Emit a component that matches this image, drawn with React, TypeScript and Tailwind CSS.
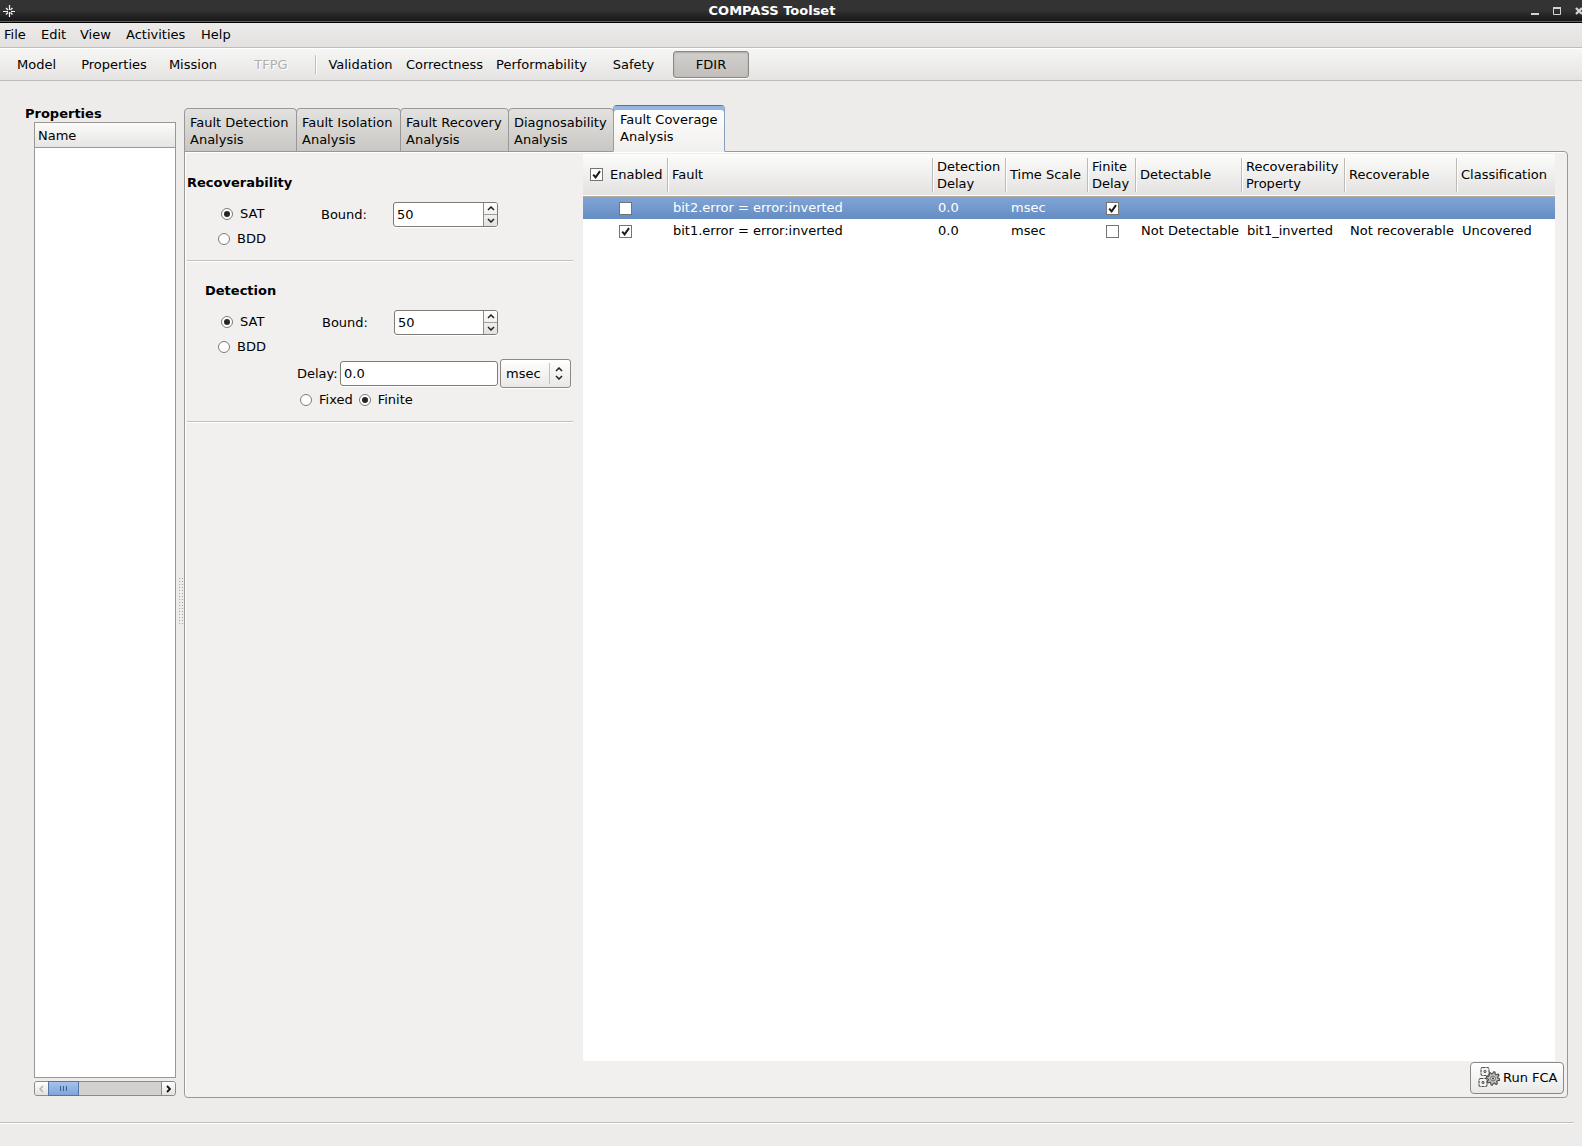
import React, { useState } from 'react';
import clsx from 'clsx';

interface FaultRow {
  enabled: boolean;
  fault: string;
  delay: string;
  scale: string;
  finite: boolean;
  detectable: string;
  property: string;
  recoverable: string;
  classification: string;
}

const MENUS = [
  { label: 'File', width: 'w-[37px]' },
  { label: 'Edit', width: 'w-[39px]' },
  { label: 'View', width: 'w-[46px]' },
  { label: 'Activities', width: 'w-[75px]' },
  { label: 'Help', width: 'w-[46px]' },
];

const TABS = [
  { label: 'Fault Detection', width: 'w-[113px]' },
  { label: 'Fault Isolation', width: 'w-[105px]' },
  { label: 'Fault Recovery', width: 'w-[109px]' },
  { label: 'Diagnosability', width: 'w-[106px]' },
  { label: 'Fault Coverage', width: 'w-[112px]' },
];

const COLUMNS = [
  { label: 'Fault', width: '' },
  { label: 'Detection Delay', width: 'w-[73px]' },
  { label: 'Time Scale', width: 'w-[82px]' },
  { label: 'Finite Delay', width: 'w-[48px]' },
  { label: 'Detectable', width: 'w-[106px]' },
  { label: 'Recoverability Property', width: 'w-[103px]' },
  { label: 'Recoverable', width: 'w-[112px]' },
  { label: 'Classification', width: 'w-[98px]' },
];

const FAULTS: FaultRow[] = [
  {
    enabled: false,
    fault: 'bit2.error = error:inverted',
    delay: '0.0',
    scale: 'msec',
    finite: true,
    detectable: '',
    property: '',
    recoverable: '',
    classification: '',
  },
  {
    enabled: true,
    fault: 'bit1.error = error:inverted',
    delay: '0.0',
    scale: 'msec',
    finite: false,
    detectable: 'Not Detectable',
    property: 'bit1_inverted',
    recoverable: 'Not recoverable',
    classification: 'Uncovered',
  },
];

const Check: React.FC<{ label: string; checked: boolean; id?: string }> = ({ label, checked, id }) => (
  <span className="inline-grid size-[13px] shrink-0 align-middle">
    <input
      id={id}
      type="checkbox"
      aria-label={label}
      defaultChecked={checked}
      className="peer col-start-1 row-start-1 size-[13px] appearance-none border border-[#767472] bg-white"
    />
    <svg viewBox="0 0 13 13" className="pointer-events-none col-start-1 row-start-1 hidden size-[13px] peer-checked:block">
      <path d="M3.2 6.6 L5.6 9.4 L10 3.2" fill="none" stroke="#1c1c1c" strokeWidth="2" />
    </svg>
  </span>
);

const Radio: React.FC<{ name: string; label: string; checked?: boolean; className?: string }> = ({
  name,
  label,
  checked,
  className,
}) => (
  <label className={clsx('flex h-[25px] items-center pb-[2px]', className)}>
    <span className="mt-px grid size-[12px] place-items-center">
      <input
        type="radio"
        name={name}
        defaultChecked={checked}
        className="peer col-start-1 row-start-1 size-[12px] appearance-none rounded-full border border-[#7d7b79] bg-white"
      />
      <span className="pointer-events-none col-start-1 row-start-1 hidden size-[6px] rounded-full bg-[#252525] peer-checked:block" />
    </span>
    <span className="ml-[7px]">{label}</span>
  </label>
);

const Chevron: React.FC<{ d: string }> = ({ d }) => (
  <svg viewBox="0 0 8 5" className="h-[5px] w-[8px]">
    <path d={d} fill="none" stroke="#222" strokeWidth="1.5" />
  </svg>
);

const Bound: React.FC<{ id: string; className?: string }> = ({ id, className }) => {
  const [value, setValue] = useState(50);
  return (
    <div className={clsx('flex items-center', className)}>
      <label htmlFor={id} className="w-[72px]">
        Bound:
      </label>
      <div className="flex h-[25px] flex-1 rounded-[3px] border border-[#7d7a77] bg-white shadow-[0_1px_0_#fff]">
        <input
          id={id}
          type="number"
          value={value}
          onChange={(e) => setValue(Number(e.target.value))}
          className="w-0 flex-1 appearance-none px-[3px] outline-none [-moz-appearance:textfield] [&::-webkit-inner-spin-button]:appearance-none"
        />
        <div className="flex w-[14px] flex-col rounded-r-[2px] border-l border-[#8e8b88] bg-linear-to-b from-white to-[#e2e1df]">
          <button
            type="button"
            aria-label="Increase bound"
            onClick={() => setValue(value + 1)}
            className="grid flex-1 place-items-center border-b border-[#a09e9b]"
          >
            <Chevron d="M1 4 L4 1 L7 4" />
          </button>
          <button
            type="button"
            aria-label="Decrease bound"
            onClick={() => setValue(value - 1)}
            className="grid flex-1 place-items-center"
          >
            <Chevron d="M1 1 L4 4 L7 1" />
          </button>
        </div>
      </div>
    </div>
  );
};

const Rule = () => <hr className="mr-[10px] ml-[2px] h-[2px] border-t border-b border-t-[#c0bfbc] border-b-white" />;

// Outline of a gear: four points per tooth, alternating outer and inner radius
const gearPoints = (cx: number, cy: number, outer: number, inner: number, teeth: number) =>
  Array.from({ length: teeth * 4 }, (_, i) => {
    const angle = ((i + 0.5) / (teeth * 4)) * Math.PI * 2;
    const r = i % 4 < 2 ? outer : inner;
    return `${(cx + r * Math.cos(angle)).toFixed(2)},${(cy + r * Math.sin(angle)).toFixed(2)}`;
  }).join(' ');

const GearIcon = () => (
  <svg viewBox="0 0 22 22" className="size-[22px]" strokeLinejoin="round">
    <polygon points={gearPoints(15, 12.5, 6.8, 4.8, 8)} fill="#c3c6bf" stroke="#4c4f4a" strokeWidth="1.2" />
    <circle cx="15" cy="12.5" r="2.4" fill="#e6e7e4" stroke="#666964" />
    <circle cx="15" cy="12.5" r="0.9" fill="#222" />
    <g fill="#f4f4f2" stroke="#4c4f4a" strokeWidth="1.2">
      <rect x="3" y="1.5" width="8" height="8" rx="1.5" strokeDasharray="3 0.8" />
      <rect x="1" y="12.5" width="8" height="8" rx="1.5" strokeDasharray="3 0.8" />
    </g>
    <circle cx="7" cy="5.5" r="1.1" fill="#ddd" stroke="#222" strokeWidth="0.8" />
    <circle cx="5" cy="16.5" r="1.1" fill="#ddd" stroke="#222" strokeWidth="0.8" />
  </svg>
);

const TitleBar = () => (
  <header className="flex h-[23px] items-center overflow-hidden border-b border-black bg-linear-to-b from-[#333] from-45% to-[#151515] text-white shadow-[inset_0_-1px_0_#4a6588]">
    <svg viewBox="0 0 20 22" className="h-[22px] w-[20px] shrink-0" stroke="#f2f2f0">
      <path d="M9.5 5v5M9.5 12v5M3 11.5h5M11 11.5h4" strokeWidth="1.2" />
      <path d="M6 8l2 2M12.5 8l-2 2M6 14.5l2-2M12.5 14.5l-2-2" strokeWidth="1.4" />
    </svg>
    <h1 className="flex-1 pb-[2px] text-center font-bold">COMPASS Toolset</h1>
    <div className="flex w-[58px] shrink-0 gap-[14px] pl-[7px]">
      <button type="button" aria-label="Minimize" className="shrink-0">
        <svg viewBox="0 0 8 8" className="size-[8px]">
          <path d="M0 7h8" stroke="#d3d3d1" strokeWidth="2" />
        </svg>
      </button>
      <button type="button" aria-label="Maximize" className="shrink-0">
        <svg viewBox="0 0 8 8" className="size-[8px]">
          <path d="M0 1h8" stroke="#d3d3d1" strokeWidth="2" />
          <path d="M.5 0v7.5h7V0" fill="none" stroke="#d3d3d1" />
        </svg>
      </button>
      <button type="button" aria-label="Close" className="shrink-0">
        <svg viewBox="0 0 8 8" className="size-[8px]">
          <path d="M1 1l6 6M7 1l-6 6" stroke="#d3d3d1" strokeWidth="2.4" />
        </svg>
      </button>
    </div>
  </header>
);

const Toolbar = () => (
  <div className="flex h-[33px] items-center border-t border-b border-t-white border-b-[#bfbdbb] bg-linear-to-b from-[#f6f6f5] to-[#e5e4e2]">
    <button type="button" className="w-[73px]">Model</button>
    <button type="button" className="w-[82px]">Properties</button>
    <button type="button" className="w-[76px]">Mission</button>
    <button type="button" disabled className="w-[80px] text-[#b1afac] [text-shadow:1px_1px_0_#fff]">TFPG</button>
    <span className="mx-[4px] h-[19px] w-[2px] border-l border-r border-l-[#c0bfbc] border-r-white" />
    <button type="button" className="w-[79px]">Validation</button>
    <button type="button" className="w-[89px]">Correctness</button>
    <button type="button" className="w-[105px]">Performability</button>
    <button type="button" className="w-[79px]">Safety</button>
    <button
      type="button"
      aria-pressed="true"
      className="h-[27px] w-[76px] rounded-[3px] border border-[#8b8885] bg-linear-to-b from-[#d2d0cd] to-[#c1bebb] shadow-[0_1px_0_#fff,inset_0_1px_2px_#aaa7a4]"
    >
      FDIR
    </button>
  </div>
);

const PropertiesPanel = () => (
  <aside className="flex w-[176px] shrink-0 flex-col pt-[24px] pb-[2px]">
    <h2 className="pl-[25px] font-bold">Properties</h2>
    <div className="ml-[34px] flex flex-1 flex-col border border-[#9a9896] bg-white">
      <div className="h-[25px] border-b border-[#9a9896] bg-linear-to-b from-[#fbfbfa] to-[#e6e5e3] px-[3px] pt-[4px]">Name</div>
    </div>
    <div className="mt-[3px] ml-[34px] flex h-[15px] rounded-[3px] border border-[#8d8b88] bg-[#d2d1cf]">
      <button
        type="button"
        aria-label="Scroll left"
        disabled
        className="grid w-[13px] place-items-center rounded-l-[2px] bg-linear-to-b from-white to-[#e2e1df]"
      >
        <svg viewBox="0 0 5 8" className="h-[8px] w-[5px]">
          <path d="M4 1 L1 4 L4 7" fill="none" stroke="#b5b3b0" strokeWidth="1.5" />
        </svg>
      </button>
      <div className="-my-px flex w-[31px] items-center justify-center gap-[2px] border border-[#4f76ab] bg-linear-to-b from-[#a5c3ea] to-[#7fa5d8]">
        <span className="h-[5px] w-px bg-[#3b5f92]" />
        <span className="h-[5px] w-px bg-[#3b5f92]" />
        <span className="h-[5px] w-px bg-[#3b5f92]" />
      </div>
      <button
        type="button"
        aria-label="Scroll right"
        className="ml-auto grid w-[14px] place-items-center rounded-r-[2px] border-l border-[#8d8b88] bg-linear-to-b from-white to-[#e2e1df]"
      >
        <svg viewBox="0 0 5 8" className="h-[8px] w-[5px]">
          <path d="M1 1 L4 4 L1 7" fill="none" stroke="#111" strokeWidth="1.8" />
        </svg>
      </button>
    </div>
  </aside>
);

const Splitter = () => (
  <div className="flex w-[8px] shrink-0 items-center justify-center pt-[22px]">
    <div className="grid grid-cols-2 gap-[2px] pl-[2px]">
      {Array.from({ length: 32 }, (_, i) => (
        <span key={i} className="size-px bg-[#a3a19e]" />
      ))}
    </div>
  </div>
);

const Settings = () => (
  <form className="w-[398px] shrink-0 pt-[22px]">
    <h3 className="pl-[2px] font-bold">Recoverability</h3>
    <div className="mt-[11px] mb-[8px] flex items-start">
      <div className="w-[136px] pl-[33px]">
        <Radio name="recoverability" label="SAT" checked className="pl-[3px]" />
        <Radio name="recoverability" label="BDD" />
      </div>
      <Bound id="recoverability-bound" className="w-[177px]" />
    </div>
    <Rule />

    <h3 className="mt-[20px] pl-[20px] font-bold">Detection</h3>
    <div className="mt-[11px] flex h-[49px] items-start">
      <div className="w-[137px] pl-[33px]">
        <Radio name="detection" label="SAT" checked className="pl-[3px]" />
        <Radio name="detection" label="BDD" />
      </div>
      <Bound id="detection-bound" className="w-[176px]" />
    </div>
    <div className="flex items-center pl-[112px]">
      <label htmlFor="delay" className="w-[43px]">
        Delay:
      </label>
      <input
        id="delay"
        defaultValue="0.0"
        className="h-[25px] w-[158px] rounded-[3px] border border-[#7d7a77] bg-white px-[3px] shadow-[0_1px_0_#fff] outline-none"
      />
      <div className="ml-[2px] grid w-[71px] items-center">
        <select
          aria-label="Delay time scale"
          className="col-start-1 row-start-1 h-[29px] appearance-none rounded-[3px] border border-[#8b8885] bg-linear-to-b from-white to-[#e9e8e6] pl-[5px] shadow-[0_1px_0_#fff]"
        >
          <option>msec</option>
          <option>sec</option>
          <option>min</option>
        </select>
        <span className="pointer-events-none col-start-1 row-start-1 flex h-[21px] w-[22px] flex-col items-center justify-center gap-[3px] justify-self-end border-l border-[#c0bfbc] pr-[4px]">
          <Chevron d="M1 4 L4 1 L7 4" />
          <Chevron d="M1 1 L4 4 L7 1" />
        </span>
      </div>
    </div>
    <div className="mb-[8px] flex gap-[6px] pl-[115px]">
      <Radio name="delay-kind" label="Fixed" />
      <Radio name="delay-kind" label="Finite" checked />
    </div>
    <Rule />
  </form>
);

const FaultTable = () => (
  <table className="w-full table-fixed border-collapse text-left">
    <thead>
      <tr className="h-[42px] border-b border-[#b5aca0] bg-linear-to-b from-[#fcfcfb] to-[#e3e2e0]">
        <th className="w-[85px] p-0 font-normal">
          <div className="flex h-[34px] items-center gap-[7px] border-r border-[#bdbbb8] pl-[7px] shadow-[1px_0_0_#fff]">
            <Check id="enable-all" label="Enable all faults" checked />
            <label htmlFor="enable-all">Enabled</label>
          </div>
        </th>
        {COLUMNS.map((col, i) => (
          <th key={col.label} className={clsx('p-0 font-normal', col.width)}>
            <div
              className={clsx(
                'flex h-[34px] items-center pl-[4px]',
                i < COLUMNS.length - 1 && 'border-r border-[#bdbbb8] shadow-[1px_0_0_#fff]',
              )}
            >
              {col.label}
            </div>
          </th>
        ))}
      </tr>
    </thead>
    <tbody>
      {FAULTS.map((row, i) => (
        <tr
          key={row.fault}
          className={clsx('h-[23px] whitespace-nowrap', i === 0 && 'bg-linear-to-b from-[#83a5d6] to-[#648dc3] text-white')}
        >
          <td className="p-0 text-center leading-none">
            <Check label={`Enable ${row.fault}`} checked={row.enabled} />
          </td>
          <td className="py-0 pr-0 pl-[5px]">{row.fault}</td>
          <td className="py-0 pr-0 pl-[5px]">{row.delay}</td>
          <td className="py-0 pr-0 pl-[5px]">{row.scale}</td>
          <td className="p-0 text-center leading-none">
            <Check label={`Finite delay for ${row.fault}`} checked={row.finite} />
          </td>
          <td className="py-0 pr-0 pl-[5px]">{row.detectable}</td>
          <td className="py-0 pr-0 pl-[5px]">{row.property}</td>
          <td className="py-0 pr-0 pl-[5px]">{row.recoverable}</td>
          <td className="py-0 pr-0 pl-[5px]">{row.classification}</td>
        </tr>
      ))}
    </tbody>
  </table>
);

export default function App() {
  const [tab, setTab] = useState(4);

  return (
    <div className="flex min-h-screen flex-col bg-[#edeceb] font-['DejaVu_Sans',sans-serif] text-[13px] leading-[17px] text-black">
      <TitleBar />
      <nav className="flex h-[25px] items-center border-b border-[#bfbdbb] bg-linear-to-b from-[#ecebea] to-[#e2e1df] pb-px pl-[4px]">
        {MENUS.map((menu) => (
          <button key={menu.label} type="button" className={clsx('text-left', menu.width)}>
            {menu.label}
          </button>
        ))}
      </nav>
      <Toolbar />

      <main className="flex flex-1 pb-[24px]">
        <PropertiesPanel />
        <Splitter />
        <div className="mr-[14px] flex min-w-0 flex-1 flex-col pt-[24px]">
          {/* Tabs overlap the pane border by one pixel */}
          <div role="tablist" className="z-10 -mb-px flex items-end">
            {TABS.map((t, i) => (
              <button
                key={t.label}
                type="button"
                role="tab"
                aria-selected={i === tab}
                onClick={() => setTab(i)}
                className={clsx(
                  'rounded-t-[4px] border text-left whitespace-nowrap',
                  t.width,
                  i === tab
                    ? 'h-[47px] border-x-[#8aa0bf] border-t-[#4f76ab] border-b-[#f1f0ee] bg-linear-to-b from-white to-[#f1f0ee] pb-[2px] pl-[6px] shadow-[inset_0_4px_0_#93b6e2]'
                    : '-mr-px h-[44px] border-[#9a9896] bg-linear-to-b from-[#e3e2e0] to-[#c9c7c3] pt-px pl-[5px]',
                )}
              >
                {t.label}
                <br />
                Analysis
              </button>
            ))}
          </div>
          <div className="flex flex-1 flex-col rounded-r-[4px] rounded-bl-[4px] border border-[#9a9896] bg-[#f1f0ee] shadow-[inset_1px_1px_0_#fff]">
            <div className="flex flex-1">
              <Settings />
              <div className="mt-[2px] mr-[12px] min-w-0 flex-1 bg-white">
                <FaultTable />
              </div>
            </div>
            <div className="flex justify-end pt-px pr-[3px] pb-[3px]">
              <button
                type="button"
                className="flex h-[32px] w-[94px] items-center gap-[3px] rounded-[4px] border border-[#8b8885] bg-linear-to-b from-white to-[#e9e8e6] pb-[2px] pl-[7px] whitespace-nowrap"
              >
                <GearIcon />
                Run FCA
              </button>
            </div>
          </div>
        </div>
      </main>

      <footer className="h-[24px] pr-[8px]">
        <div className="h-[2px] border-t border-b border-t-[#c0bfbc] border-b-white" />
      </footer>
    </div>
  );
}
